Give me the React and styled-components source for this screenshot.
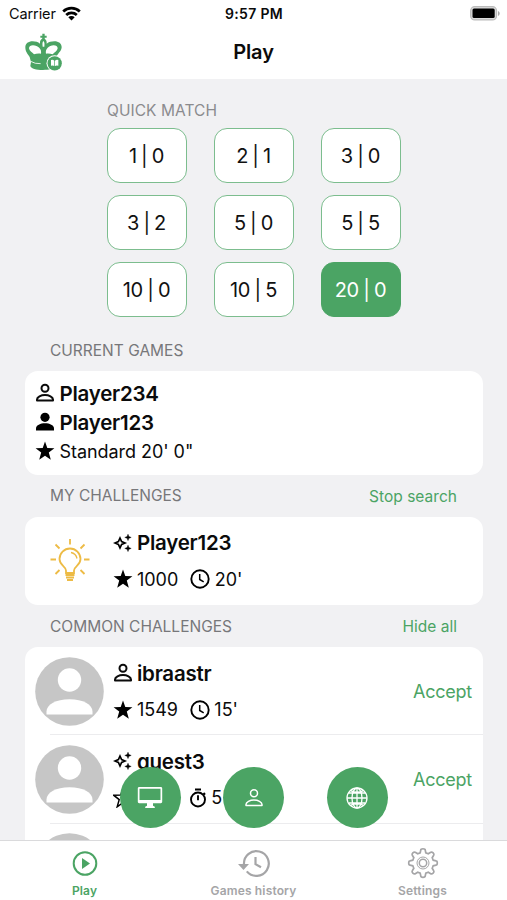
import React from 'react'
import styled, { createGlobalStyle } from 'styled-components'

const GlobalStyle = createGlobalStyle`
    * {
        box-sizing: border-box;
    }
    body {
        margin: 0;
        background: #f1f1f3;
        font-family: Inter, "Liberation Sans", sans-serif;
        color: #0b0b0b;
    }
    svg {
        display: block;
        flex-shrink: 0;
    }
`;

const green = '#4ba464';

const Screen = styled.div`
    position: relative;
    display: flex;
    flex-direction: column;
    width: 507px;
    height: 900px;
    overflow: hidden;
    background: #f1f1f3;
`;

const Header = styled.header`
    height: 79px;
    flex-shrink: 0;
    background: white;
`;

const StatusBar = styled.div`
    display: grid;
    grid-template-columns: 1fr auto 1fr;
    align-items: center;
    height: 27px;
    padding: 0 7px 0 9px;
    font-size: 14.5px;
`;

const Carrier = styled.div`
    display: flex;
    align-items: center;
    gap: 6px;
    letter-spacing: -0.1px;
`;

const Time = styled.div`
    font-size: 14px;
    font-weight: 600;
    letter-spacing: 0.3px;
    margin-left: -1px;
`;

const BatteryBox = styled.div`
    display: flex;
    justify-content: flex-end;
`;

const TitleBar = styled.div`
    display: grid;
    grid-template-columns: 1fr auto 1fr;
    height: 51px;
    padding: 1px 20px 0;
`;

const Title = styled.h1`
    margin: 0;
    line-height: 49px;
    font-size: 20px;
    font-weight: 600;
    letter-spacing: -0.1px;
`;

const Content = styled.main`
    flex: 1;
    min-height: 0;
    overflow: hidden;
`;

const QuickMatch = styled.section`
    width: 293px;
    margin: 0 auto;
    padding: 20.5px 0 0;
`;

const Label = styled.h2`
    margin: 0;
    font-size: 15.5px;
    line-height: 22px;
    font-weight: 400;
    letter-spacing: ${props => props.$light ? '0.05px' : '0'};
    color: ${props => props.$light ? '#8b8b8e' : '#77777a'};
`;

const MatchGrid = styled.div`
    display: grid;
    grid-template-columns: repeat(3, 80px);
    grid-auto-rows: 55px;
    gap: 12.2px 27px;
    margin-top: 6px;
`;

const MatchButton = styled.button`
    padding: 1px 1px 0 0;
    border: 1.5px solid ${props => props.$active ? green : '#7cbd8e'};
    border-radius: 13px;
    background: ${props => props.$active ? green : 'white'};
    color: ${props => props.$active ? 'white' : '#111'};
    font-family: inherit;
    font-size: 20px;
    letter-spacing: -0.3px;
    word-spacing: -1px;
`;

const SectionHead = styled.div`
    display: flex;
    justify-content: space-between;
    align-items: center;
    height: ${props => props.$tall ? '54px' : '42px'};
    padding: ${props => props.$tall ? '14px 50px 0' : '1px 50px 0'};
`;

const Link = styled.span`
    color: ${green};
    font-size: 15.5px;
    letter-spacing: 0.03px;
`;

const Card = styled.section`
    width: 458px;
    margin-left: 25px;
    border-radius: 13px;
    background: white;
`;

const GameCard = styled(Card)`
    height: 104px;
    padding: 8px 10px;
`;

const Line = styled.div`
    display: flex;
    align-items: center;
    gap: 4.5px;
    height: 29px;
`;

const Name = styled.span`
    font-size: 20.5px;
    font-weight: 600;
    letter-spacing: -0.25px;
`;

const Detail = styled.span`
    font-size: 18px;
    letter-spacing: -0.05px;
`;

const Challenge = styled.div`
    display: flex;
    align-items: center;
    height: 88.3px;
    padding: 0 11px 0 10px;
`;

// the separator starts under the avatar, not at the card edge
const Separator = styled.div`
    height: 1px;
    margin: -1px 0 0 25px;
    background: #ececee;
`;

const Picture = styled.div`
    display: flex;
    justify-content: center;
    width: 69px;
    margin-right: 8.5px;
`;

const Info = styled.div`
    flex: 1;
`;

const Stats = styled.div`
    display: flex;
    align-items: center;
    gap: 12px;
    margin-top: 7.5px;
`;

const Accept = styled.span`
    color: ${green};
    font-size: 18px;
    letter-spacing: -0.25px;
`;

const FabRow = styled.div`
    position: absolute;
    left: 119.5px;
    top: 767px;
    display: flex;
    gap: 42.7px;
`;

const Fab = styled.button`
    display: flex;
    align-items: center;
    justify-content: center;
    width: 61px;
    height: 61px;
    padding: 0;
    border: 0;
    border-radius: 50%;
    background: ${green};
    color: white;
`;

const TabBar = styled.nav`
    display: grid;
    grid-template-columns: repeat(3, 1fr);
    height: 60px;
    flex-shrink: 0;
    border-top: 1px solid #dadadc;
    background: white;
`;

const Tab = styled.div`
    display: flex;
    flex-direction: column;
    align-items: center;
    padding-top: 5px;
    gap: 3px;
    color: ${props => props.$active ? green : '#a5a5a7'};
    font-size: 12px;
    font-weight: 600;
    line-height: 15px;
    letter-spacing: 0.15px;
`;

const Logo = () => (
    <svg width="50" height="50" viewBox="0 0 150 150" fill={green}>
        <path d="M67 17h7v6h6v6h-6v6h-7v-6h-6v-6h6z" />
        <path fillRule="evenodd" d="M70 30c8 4 11 9 10 17 6-5 14-7 23-7 13 0 22 7 22 18s-13 20-16 29l-3 14 2 14c-6 8-22 11-39 11-21 0-35-4-38-12l2-12-4-15c-6-9-13-16-13-29 0-11 9-18 22-18 9 0 16 2 22 7-1-8 2-13 10-17zM70 39c-3 4-3 8-2 17h5c1-9 1-13-3-17zM39 52c-7 0-12 3-12 9 1 8 9 12 15 18 6-2 12-3 21-2 3-14-9-25-24-25zm62 0c-14 0-26 11-23 25 8-1 14 0 20 2 6-6 14-10 15-18 0-6-5-9-12-9z" />
        <path d="M32 100q13 8 30 7" fill="none" stroke="white" strokeWidth="2.500" />
        <circle cx="104" cy="106" r="24.500" fill="white" />
        <circle cx="104" cy="106" r="21.500" />
        <path d="M93 96q6-2 10 2v16q-4-3-10-1zm22 0q-6-2-10 2v16q4-3 10-1z" fill="white" />
    </svg>
)

const Wifi = () => (
    <svg width="19" height="15" viewBox="0 0 19 15" fill="none" stroke="black" strokeWidth="2.700">
        <path d="M1.200 5.500a12 12 0 0 1 16.600 0M4.200 8.900a7.700 7.700 0 0 1 10.600 0" />
        <path d="M9.500 14.400 6.300 11.200a4.600 4.600 0 0 1 6.400 0z" fill="black" stroke="none" />
    </svg>
)

const Battery = () => (
    <svg width="30" height="15" viewBox="0 0 30 15">
        <rect x="0.7" y="0.7" width="25.800" height="13.200" rx="4" fill="#ddd" stroke="#bbb" strokeWidth="1.300" />
        <rect x="2.500" y="2.500" width="22.200" height="9.600" rx="1.500" fill="black" />
        <path d="M28 5v5c1-.5 1.700-1.400 1.700-2.500S29 5.500 28 5z" fill="#aaa" />
    </svg>
)

const PersonLine = ({ size = 20, stroke = 2 }) => (
    <svg width={size} height={size} viewBox="0 0 20 20" fill="none" stroke="currentColor" strokeWidth={stroke}>
        <circle cx="10" cy="5.300" r="3.500" />
        <path d="M2 17.600v-1c0-2.700 4-4.600 8-4.600s8 1.900 8 4.600v1z" strokeLinejoin="round" />
    </svg>
)

const PersonSolid = () => (
    <svg width="20" height="20" viewBox="0 0 20 20">
        <circle cx="10" cy="5.300" r="4.600" />
        <path d="M1 18.600v-2.400c0-3 4.500-5 9-5s9 2 9 5v2.400z" />
    </svg>
)

const Star = ({ line }) => (
    <svg width="20" height="20" viewBox="0 0 20 20" fill={line ? 'none' : 'black'} stroke={line ? 'black' : 'none'} strokeWidth="1.500">
        <path d="M10 .5l2.300 6.500 7.100.2-5.600 4.400 2 7.200L10 14.700l-5.800 4.100 2-7.200L.6 7.200l7.100-.2z" />
    </svg>
)

const Sparkles = () => (
    <svg width="20" height="20" viewBox="0 0 20 20">
        <path d="M7 5 8.600 8.500 12 10 8.600 11.500 7 15 5.400 11.500 2 10 5.400 8.500z" fill="none" stroke="black" strokeWidth="1.700" />
        <path d="M15 1.200l.9 2.300 2.300.9-2.300.9-.9 2.300-.9-2.300-2.300-.9 2.300-.9zM15 12.200l.9 2.300 2.300.9-2.300.9-.9 2.300-.9-2.300-2.300-.9 2.300-.9z" stroke="black" strokeWidth=".4" />
    </svg>
)

const Clock = () => (
    <svg width="20" height="20" viewBox="0 0 20 20" fill="none" stroke="black">
        <circle cx="10" cy="10" r="8.700" strokeWidth="1.900" />
        <path d="M9.700 5v5.500l4 2.300" strokeWidth="1.500" />
    </svg>
)

const Stopwatch = () => (
    <svg width="17" height="20" viewBox="1 0 17 20" fill="none" stroke="black" strokeWidth="1.900">
        <circle cx="9" cy="11.500" r="7" />
        <path d="M6 1.500h6M9 7.300v5M14.500 5l1.600 1.600" />
    </svg>
)

const Bulb = () => (
    <svg width="42" height="44" viewBox="0 0 42 44" fill="none" stroke="#edbb45" strokeWidth="1.800">
        <path d="M17 34v-2.500c0-4-6.500-5.200-6.500-11.500a10.500 10.500 0 0 1 21 0c0 6.300-6.500 7.500-6.500 11.500V34z" />
        <path d="M22 13.500q5 1 6 6" strokeWidth="1.300" />
        <path d="M16.500 36h9M17 38.500h8M18 41h6" strokeWidth="2.200" />
        <path d="M21 0v5.500M6.500 5.500l4 4M35.500 5.500l-4 4M1.500 20.500H7M35 20.500h5.500M6.500 35l4-4M35.500 35l-4-4" />
    </svg>
)

const Avatar = () => (
    <svg width="69" height="69" viewBox="0 0 69 69">
        <circle cx="34.500" cy="34.500" r="34.300" fill="#c6c6c6" />
        <circle cx="34.500" cy="23" r="11.700" fill="white" />
        <path d="M11.500 57.500v-3c0-7 9.500-12.300 23-12.300s23 5.300 23 12.300v3z" fill="white" />
    </svg>
)

const Monitor = () => (
    <svg width="26" height="23" viewBox="0 0 26 23" fill="currentColor">
        <path fillRule="evenodd" d="M2.200 1h21.600c.8 0 1.400.6 1.400 1.400v13.400c0 .8-.6 1.400-1.400 1.400H16v2.500l1.800 1v1.200H8.200v-1.200l1.800-1v-2.500H2.200c-.8 0-1.400-.6-1.400-1.400V2.400C.8 1.600 1.400 1 2.200 1zm.3 1.700v11.300h21V2.700z" />
    </svg>
)

const Globe = () => (
    <svg width="22" height="22" viewBox="0 0 22 22" fill="none" stroke="currentColor" strokeWidth="1.300">
        <circle cx="11" cy="11" r="10" />
        <ellipse cx="11" cy="11" rx="5" ry="10" />
        <path d="M11 1v20M1 11h20M2.800 6h16.400M2.800 16h16.400M5 3.800q6 2.800 12 0M5 18.200q6-2.800 12 0" />
    </svg>
)

const PlayIcon = () => (
    <svg width="34" height="34" viewBox="0 0 34 34">
        <circle cx="17" cy="17.500" r="11.300" fill="none" stroke="currentColor" strokeWidth="2" />
        <path d="M14 12v11l8-5.500z" fill="currentColor" />
    </svg>
)

const HistoryIcon = () => (
    <svg width="34" height="34" viewBox="0 0 34 34" fill="none" stroke="currentColor" strokeWidth="2.200">
        <path d="M7 18.500a12.400 12.400 0 1 1 2.800 6.900" />
        <path d="M18.500 11v7.200l5.500 3.100" />
        <path d="M1 18h11l-5.500 6z" fill="currentColor" stroke="none" />
    </svg>
)

// eight rounded teeth around the hub
const GearIcon = () => (
    <svg width="34" height="34" viewBox="0 0 34 34" fill="none" stroke="currentColor" strokeWidth="1.700">
        <path d="M14.8 4c0-1.700 4.400-1.700 4.400 0l.6 2.800 2.500 1 2.400-1.500c1.500-1 4 1.500 3 3l-1.500 2.400 1 2.500 2.800.6c1.700 0 1.700 4.400 0 4.400l-2.800.6-1 2.500 1.500 2.400c1 1.500-1.500 4-3 3l-2.400-1.500-2.500 1-.6 2.800c0 1.700-4.400 1.700-4.400 0l-.6-2.800-2.500-1-2.400 1.500c-1.500 1-4-1.500-3-3l1.500-2.400-1-2.500-2.800-.6c-1.700 0-1.700-4.400 0-4.400l2.800-.6 1-2.500-1.500-2.400c-1-1.500 1.500-4 3-3l2.400 1.500 2.500-1z" />
        <circle cx="17" cy="17" r="6" strokeWidth="1" />
        <circle cx="17" cy="17" r="3.700" strokeWidth="1.500" />
    </svg>
)

const matches = ['1 | 0', '2 | 1', '3 | 0', '3 | 2', '5 | 0', '5 | 5', '10 | 0', '10 | 5', '20 | 0']

function ChallengeRow({ picture, icon, name, star, rating, clock, time, accept }) {
    return (
        <Challenge>
            <Picture>{picture}</Picture>
            <Info>
                <Line>{icon}<Name>{name}</Name></Line>
                <Stats>
                    <Line>{star}<Detail>{rating}</Detail></Line>
                    <Line>{clock}<Detail>{time}</Detail></Line>
                </Stats>
            </Info>
            {accept && <Accept>Accept</Accept>}
        </Challenge>
    )
}

function App() {
    return (
        <Screen>
            <GlobalStyle />
            <Header>
                <StatusBar>
                    <Carrier>Carrier <Wifi /></Carrier>
                    <Time>9:57 PM</Time>
                    <BatteryBox><Battery /></BatteryBox>
                </StatusBar>
                <TitleBar>
                    <Logo />
                    <Title>Play</Title>
                </TitleBar>
            </Header>
            <Content>
                <QuickMatch>
                    <Label $light>QUICK MATCH</Label>
                    <MatchGrid>
                        {matches.map(match => (
                            <MatchButton key={match} $active={match === '20 | 0'}>{match}</MatchButton>
                        ))}
                    </MatchGrid>
                </QuickMatch>
                <SectionHead $tall>
                    <Label>CURRENT GAMES</Label>
                </SectionHead>
                <GameCard>
                    <Line><PersonLine /><Name>Player234</Name></Line>
                    <Line><PersonSolid /><Name>Player123</Name></Line>
                    <Line><Star /><Detail>Standard 20' 0"</Detail></Line>
                </GameCard>
                <SectionHead>
                    <Label>MY CHALLENGES</Label>
                    <Link>Stop search</Link>
                </SectionHead>
                <Card>
                    <ChallengeRow picture={<Bulb />} icon={<Sparkles />} name="Player123"
                        star={<Star />} rating="1000" clock={<Clock />} time="20'" />
                </Card>
                <SectionHead>
                    <Label>COMMON CHALLENGES</Label>
                    <Link>Hide all</Link>
                </SectionHead>
                <Card>
                    <ChallengeRow picture={<Avatar />} icon={<PersonLine />} name="ibraastr"
                        star={<Star />} rating="1549" clock={<Clock />} time="15'" accept />
                    <Separator />
                    <ChallengeRow picture={<Avatar />} icon={<Sparkles />} name="guest3"
                        star={<Star line />} rating="1500" clock={<Stopwatch />} time="5'" accept />
                    <Separator />
                    <ChallengeRow picture={<Avatar />} />
                </Card>
            </Content>
            <FabRow>
                <Fab><Monitor /></Fab>
                <Fab><PersonLine size={20} stroke={1.5} /></Fab>
                <Fab><Globe /></Fab>
            </FabRow>
            <TabBar>
                <Tab $active><PlayIcon />Play</Tab>
                <Tab><HistoryIcon />Games history</Tab>
                <Tab><GearIcon />Settings</Tab>
            </TabBar>
        </Screen>
    )
}

export default App
